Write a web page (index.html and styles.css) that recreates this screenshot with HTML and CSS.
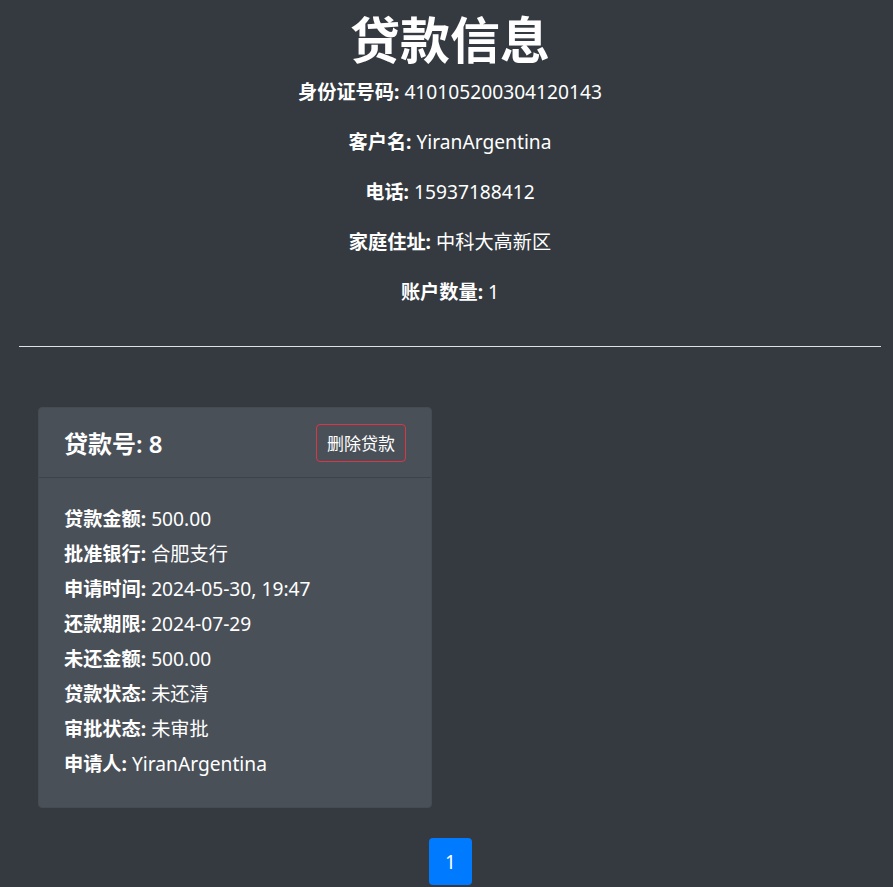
FILE: index.html
```
<!DOCTYPE html>
<html lang="zh">
<head>
<meta charset="utf-8">
<link rel="stylesheet" href="styles.css">
</head>
<body>
<div class="page">
  <h1 class="title">贷款信息</h1>
  <div class="info">
    <p><b>身份证号码:</b> 410105200304120143</p>
    <p><b>客户名:</b> YiranArgentina</p>
    <p><b>电话:</b> 15937188412</p>
    <p><b>家庭住址:</b> 中科大高新区</p>
    <p><b>账户数量:</b> 1</p>
  </div>
  <hr class="divider">
  <div class="cards">
    <div class="card">
      <div class="card-header">
        <h2 class="card-title">贷款号: 8</h2>
        <button class="btn-del">删除贷款</button>
      </div>
      <div class="card-body">
        <p><b>贷款金额:</b> 500.00</p>
        <p><b>批准银行:</b> 合肥支行</p>
        <p><b>申请时间:</b> 2024-05-30, 19:47</p>
        <p><b>还款期限:</b> 2024-07-29</p>
        <p><b>未还金额:</b> 500.00</p>
        <p><b>贷款状态:</b> 未还清</p>
        <p><b>审批状态:</b> 未审批</p>
        <p><b>申请人:</b> YiranArgentina</p>
      </div>
    </div>
  </div>
  <div class="pagination">
    <span class="page-item">1</span>
  </div>
</div>
</body>
</html>
```
FILE: styles.css
```
html, body {
  margin: 0;
  padding: 0;
  background: #343a40;
}
body {
  font-family: "Noto Sans", "Noto Sans CJK SC", sans-serif;
  color: #ffffff;
  font-size: 19.2px;
}
.page {
  padding: 0 12px 0 19px;
}
.title {
  margin: 0;
  padding-top: 4px;
  text-align: center;
  font-size: 50px;
  line-height: 66px;
  font-weight: 700;
  font-family: "Noto Sans CJK SC", sans-serif;
}
.info {
  text-align: center;
}
.info p {
  margin: 0 0 22px;
  line-height: 28px;
}
.info p:first-child {
  margin-top: 8px;
}
b {
  font-weight: 700;
}
.divider {
  margin: 40px 0 0;
  border: 0;
  border-top: 1px solid #dee2e6;
}
.cards {
  padding: 60px 0 0 19px;
}
.card {
  width: 394px;
  background: #4a5058;
  border-radius: 4px;
  border: 1px solid #454b52;
  box-sizing: border-box;
}
.card-header {
  display: flex;
  align-items: center;
  justify-content: space-between;
  padding: 15px 25px 15px 25px;
  border-bottom: 1px solid #3d434a;
  height: 70px;
  box-sizing: border-box;
}
.card-title {
  margin: 0;
  font-size: 24px;
  font-weight: 600;
}
.btn-del {
  background: transparent;
  color: #ffffff;
  border: 1px solid #dc3545;
  border-radius: 4px;
  font-family: inherit;
  font-size: 17px;
  padding: 0 10px;
  height: 38px;
}
.card-body {
  padding: 27px 25px 29px;
}
.card-body p {
  margin: 0 0 7px;
  line-height: 28px;
}
.card-body p:last-child {
  margin-bottom: 0;
}
.pagination {
  display: flex;
  justify-content: center;
  padding-top: 30px;
  padding-left: 1px;
}
.page-item {
  display: flex;
  align-items: center;
  justify-content: center;
  width: 43px;
  height: 47px;
  background: #007bff;
  border-radius: 4px;
  font-size: 19px;
}
```
